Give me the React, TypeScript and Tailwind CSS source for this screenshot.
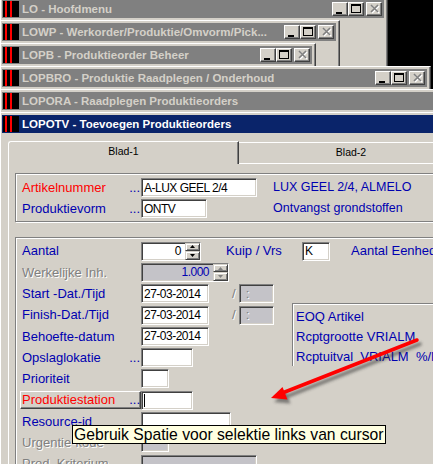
import React from "react";

const sunken =
  "border border-t-[#808080] border-l-[#808080] border-b-white border-r-white shadow-[inset_1px_1px_0_#404040,inset_-1px_-1px_0_#d4d0c8]";
const capBtn =
  "relative w-[16px] h-[14px] shrink-0 bg-[#d4d0c8] border border-t-white border-l-white border-b-[#404040] border-r-[#404040] shadow-[inset_-1px_-1px_0_#808080]";
const spinBtn =
  "flex-1 flex items-center justify-center bg-[#d4d0c8] border border-t-[#d4d0c8] border-l-[#d4d0c8] border-b-[#404040] border-r-[#404040] shadow-[inset_1px_1px_0_#ffffff,inset_-1px_-1px_0_#808080]";
const etched =
  "border border-[#808080] shadow-[inset_1px_1px_0_#ffffff,1px_1px_0_#ffffff]";
const BLUE = "text-[#0000b0]";
const RED = "text-[#ff0000]";
const DIS = "text-[#808080] [text-shadow:1px_1px_0_#ffffff]";
const GRAYBG = "bg-[#c4c3c8]";
const FIELDTXT = "text-[12px] tracking-[-0.5px]";

function CaptionButtons() {
  return (
    <div className="flex items-center shrink-0">
      <div className={capBtn}>
        <div className="absolute left-[3px] top-[9px] w-[6px] h-[2px] bg-black" />
      </div>
      <div className={capBtn}>
        <div className="absolute left-[2px] top-[1px] w-[10px] h-[9px] border border-black border-t-2" />
      </div>
      <div className="w-[2px]" />
      <div className={capBtn}>
        <svg width="11" height="10" className="absolute left-[2px] top-[1px]">
          <path d="M2 1 L9 8 M9 1 L2 8" stroke="#ffffff" strokeWidth="1.6" transform="translate(1,1)" />
          <path d="M2 1 L9 8 M9 1 L2 8" stroke="#808080" strokeWidth="1.6" />
        </svg>
      </div>
    </div>
  );
}

function Win({
  cls,
  title,
  active,
  buttons,
  children,
}: {
  cls: string;
  title: string;
  active?: boolean;
  buttons?: boolean;
  children?: React.ReactNode;
}) {
  return (
    <div
      className={`absolute left-0 h-[600px] bg-[#d4d0c8] border-l border-t border-r border-l-white border-t-white border-r-[#404040] shadow-[inset_-1px_0_0_#808080] pl-px pt-[2px] pr-[3px] ${cls}`}
    >
      <div className={`flex items-center h-[18px] pr-[2px] ${active ? "bg-[#0a246a]" : "bg-[#808080]"}`}>
        <div className="ml-px w-[16px] h-[16px] bg-black flex pl-[2px] gap-[3px] shrink-0">
          <div className="w-[2px] h-full bg-[#ff0000]" />
          <div className="w-[2px] h-full bg-[#ff0000]" />
        </div>
        <div
          className={`ml-[3px] flex-1 min-w-0 overflow-hidden whitespace-nowrap text-[11.5px] font-bold leading-[18px] ${
            active ? "text-white" : "text-[#d4d0c8]"
          }`}
        >
          {title}
        </div>
        {buttons && <CaptionButtons />}
      </div>
      {children}
    </div>
  );
}

function Label({
  text,
  color,
  dots,
  focus,
}: {
  text: string;
  color: string;
  dots?: boolean;
  focus?: boolean;
}) {
  return (
    <div className="w-[125px] h-full flex items-center pl-[4px] shrink-0">
      <div
        className={`w-[121px] h-[18px] flex items-center justify-between pl-px whitespace-nowrap ${
          focus
            ? "border border-t-white border-l-white border-b-[#404040] border-r-[#404040] shadow-[inset_-1px_-1px_0_#808080]"
            : "border border-transparent"
        }`}
      >
        <span className={color}>{text}</span>
        {dots && <span className={BLUE}>...</span>}
      </div>
    </div>
  );
}

function Input({
  w,
  text,
  gray,
  children,
}: {
  w: string;
  text?: string;
  gray?: boolean;
  children?: React.ReactNode;
}) {
  return (
    <div
      className={`h-[19px] shrink-0 ${w} ${gray ? GRAYBG : "bg-white"} ${sunken} flex items-center pl-[2px] overflow-hidden whitespace-nowrap text-black ${FIELDTXT}`}
    >
      {text}
      {children}
    </div>
  );
}

function Tri({ up, color }: { up?: boolean; color: string }) {
  return (
    <svg width="5" height="3">
      <polygon points={up ? "2.5,0 5,3 0,3" : "0,0 5,0 2.5,3"} fill={color} />
    </svg>
  );
}

function Spin({ w, value, disabled }: { w: string; value: string; disabled?: boolean }) {
  const c = disabled ? "#808080" : "#000000";
  return (
    <div className={`flex h-[19px] shrink-0 ${w} ${sunken} ${disabled ? GRAYBG : "bg-white"}`}>
      <div className={`flex-1 flex items-center justify-end pr-[4px] ${FIELDTXT} ${disabled ? BLUE : "text-black"}`}>
        {value}
      </div>
      <div className="w-[15px] flex flex-col">
        <div className={spinBtn}>
          <Tri up color={c} />
        </div>
        <div className={spinBtn}>
          <Tri color={c} />
        </div>
      </div>
    </div>
  );
}

function Row({ children }: { children: React.ReactNode }) {
  return <div className="h-[21.3px] flex items-center">{children}</div>;
}

function DateRow({ label }: { label: string }) {
  return (
    <Row>
      <Label text={label} color={BLUE} />
      <Input w="w-[68px]" text="27-03-2014" />
      <span className={`ml-[23px] ${DIS}`}>/</span>
      <div className={`ml-[3px] w-[35px] h-[19px] shrink-0 ${GRAYBG} ${sunken} flex items-center pl-[6px] ${DIS}`}>:</div>
    </Row>
  );
}

function Form() {
  return (
    <div className="ml-[6px] mt-[8px] text-[13px]">
      <div className="flex items-end h-[22px] text-[10.5px] text-black">
        <div className="relative z-10 -mb-px w-[231px] h-[23px] shrink-0 bg-[#d4d0c8] border-l border-t border-r border-l-white border-t-white border-r-[#404040] shadow-[inset_-1px_0_0_#808080] rounded-tl-[3px] flex items-center justify-center pb-[2px]">
          Blad-1
        </div>
        <div className="w-[224px] h-[21px] shrink-0 border-t border-t-white flex items-center justify-center">
          Blad-2
        </div>
      </div>
      <div className="border-l border-t border-l-white border-t-white h-[400px] pl-[6px] pt-[9px]">
        <div className={`${etched} pt-[3px] pb-[2px]`}>
          <div className="h-[21px] flex items-center">
            <Label text="Artikelnummer" color={RED} dots />
            <div className="w-[132px] shrink-0">
              <Input w="w-[116px]" text="A-LUX GEEL 2/4" />
            </div>
            <span className={`${BLUE} text-[12.5px] whitespace-nowrap`}>LUX GEEL 2/4, ALMELO</span>
          </div>
          <div className="h-[21px] flex items-center">
            <Label text="Produktievorm" color={BLUE} dots />
            <div className="w-[132px] shrink-0">
              <Input w="w-[66px]" text="ONTV" />
            </div>
            <span className={`${BLUE} text-[12.5px] whitespace-nowrap`}>Ontvangst grondstoffen</span>
          </div>
        </div>

        <div className={`${etched} mt-[15px] pt-[2.5px] h-[300px]`}>
          <Row>
            <Label text="Aantal" color={BLUE} />
            <div className="w-[85px] shrink-0">
              <Spin w="w-[60px]" value="0" />
            </div>
            <span className={`${BLUE} w-[76px] shrink-0 whitespace-nowrap`}>Kuip / Vrs</span>
            <Input w="w-[28px]" text="K" />
            <span className={`${BLUE} ml-[21px] whitespace-nowrap`}>Aantal Eenheden</span>
          </Row>
          <div className="flex">
            <div className="w-[276px] shrink-0">
              <Row>
                <Label text="Werkelijke Inh." color={DIS} />
                <Spin w="w-[88px]" value="1.000" disabled />
              </Row>
              <DateRow label="Start -Dat./Tijd" />
              <DateRow label="Finish-Dat./Tijd" />
              <Row>
                <Label text="Behoefte-datum" color={BLUE} />
                <Input w="w-[68px]" text="27-03-2014" />
              </Row>
              <Row>
                <Label text="Opslaglokatie" color={BLUE} dots />
                <Input w="w-[52px]" />
              </Row>
              <Row>
                <Label text="Prioriteit" color={BLUE} />
                <Input w="w-[28px]" />
              </Row>
              <Row>
                <Label text="Produktiestation" color={RED} dots focus />
                <Input w="w-[52px]">
                  <span className="w-px h-[13px] bg-black" />
                </Input>
              </Row>
              <Row>
                <Label text="Resource-id" color={BLUE} />
                <Input w="w-[90px]" />
              </Row>
              <Row>
                <Label text="Urgentie-kode" color={DIS} />
                <Input w="w-[28px]" gray />
              </Row>
              <Row>
                <Label text="Prod. Kriterium" color={DIS} />
                <Input w="w-[116px]" gray />
              </Row>
            </div>
            <div className="mt-[41px] h-[63px] flex-1 border-l border-t border-[#808080] shadow-[inset_1px_1px_0_#ffffff] pl-[3px] pt-[3px] overflow-hidden">
              <div className={`h-[20px] flex items-center whitespace-nowrap ${BLUE}`}>EOQ Artikel</div>
              <div className={`h-[20px] flex items-center whitespace-nowrap ${BLUE}`}>Rcptgrootte VRIALM</div>
              <div className={`h-[20px] flex items-center whitespace-pre ${BLUE}`}>{"Rcptuitval  VRIALM  %/M"}</div>
            </div>
          </div>
        </div>
      </div>
    </div>
  );
}

function Arrow() {
  return (
    <svg width="433" height="464" className="absolute left-0 top-0 pointer-events-none">
      <defs>
        <filter id="sh" x="-20%" y="-50%" width="140%" height="200%">
          <feGaussianBlur stdDeviation="1.6" />
        </filter>
      </defs>
      <g transform="translate(3,4)" opacity="0.55" filter="url(#sh)">
        <line x1="417" y1="340" x2="281" y2="393.5" stroke="#303030" strokeWidth="3.5" strokeLinecap="round" />
        <polygon points="271,398 282.5,387 287.5,399.5" fill="#303030" />
      </g>
      <line x1="417" y1="340" x2="281" y2="393.5" stroke="#ff0000" strokeWidth="3.5" strokeLinecap="round" />
      <polygon points="271,398 282.5,387 287.5,399.5" fill="#ff0000" />
    </svg>
  );
}

export default function App() {
  return (
    <div className="relative w-[433px] h-[464px] overflow-hidden bg-black font-['Liberation_Sans',Arial,sans-serif]">
      <Win cls="top-[-3px] w-[388px]" title="LO - Hoofdmenu" buttons />
      <Win cls="top-[20px] w-[340px]" title="LOWP - Werkorder/Produktie/Omvorm/Pick..." buttons />
      <Win cls="top-[43px] w-[316px]" title="LOPB - Produktieorder Beheer" buttons />
      <Win cls="top-[66px] w-[431px]" title="LOPBRO - Produktie Raadplegen / Onderhoud" buttons />
      <Win cls="top-[89px] w-[480px]" title="LOPORA - Raadplegen Produktieorders" />
      <Win cls="top-[112px] w-[480px]" title="LOPOTV - Toevoegen Produktieorders" active>
        <Form />
      </Win>
      <Arrow />
      <div className="absolute left-[72px] top-[425px] w-[314px] h-[19px] bg-[#ffffe1] border border-black pl-px flex items-center whitespace-nowrap text-[15.7px] text-black leading-none">
        Gebruik Spatie voor selektie links van cursor
      </div>
    </div>
  );
}
